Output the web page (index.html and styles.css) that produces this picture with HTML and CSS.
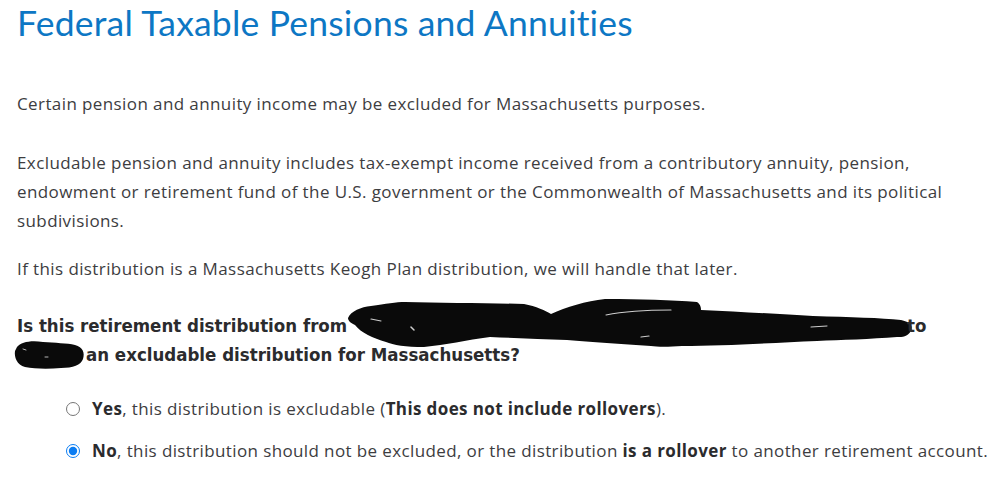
FILE: index.html
```
<!DOCTYPE html>
<html>
<head>
<meta charset="utf-8">
<link rel="stylesheet" href="styles.css">
</head>
<body>
<main class="page">
  <h1 class="title">Federal Taxable Pensions and Annuities</h1>
  <p class="intro">Certain pension and annuity income may be excluded for Massachusetts purposes.</p>
  <p class="body body-first">Excludable pension and annuity includes tax-exempt income received from a contributory annuity, pension, endowment or retirement fund of the U.S. government or the Commonwealth of Massachusetts and its political subdivisions.</p>
  <p class="body">If this distribution is a Massachusetts Keogh Plan distribution, we will handle that later.</p>
  <h2 class="question">Is this retirement distribution from <svg class="redact redact-a" width="556" height="20" viewBox="0 0 556 20" aria-hidden="true"><path d="M-3 3 C0 -4 10 -8 20 -9 C35 -11 45 -13 54 -13 C90 -12 140 -12 173 -11 C185 -9 195 -4 200 -1 C215 -8 235 -14 254 -16 C290 -16 320 -15 346 -13 C350 -10 350 -7 350 -5 C390 -3 430 -1 462 1 C500 2 530 3 550 5 C560 7 562 11 560 16 C556 22 552 22 546 22 C520 24 490 25 466 26 C420 28 370 31 331 31 C318 32 306 32 300 31 C270 29 240 27 216 25 C190 24 165 23 139 22 C115 25 95 30 73 32 C55 32 42 30 35 27 C22 23 10 18 4 10 C0 8 -3 6 -3 3 Z" fill="#0a0a0a"/><g fill="none" stroke="#ffffff" stroke-linecap="round" opacity="0.8"><path d="M20 4 L30 6" stroke-width="1.2"/><path d="M60 12 L63 15" stroke-width="1.5"/><path d="M255 0 C275 -4 300 -5 320 -5" stroke-width="1.2"/><path d="M290 22 L298 21" stroke-width="1.2"/><path d="M460 12 L476 11" stroke-width="1"/></g></svg>to <svg class="redact redact-b" width="70" height="28" viewBox="0 0 70 28" aria-hidden="true"><path d="M2 6 C6 1 16 -1 28 1 C40 2 52 2 60 4 C68 6 70 12 68 18 C66 24 58 27 46 27 C34 28 20 28 10 26 C2 24 -1 16 0 10 Z" fill="#0a0a0a"/><path d="M8 8 L11 9 M30 16 L33 16" stroke="#ffffff" stroke-width="1" stroke-linecap="round" opacity="0.7"/></svg>an excludable distribution for Massachusetts?</h2>
  <div class="options">
    <label class="option"><input type="radio" name="excl" class="radio"><span><b>Yes</b>, this distribution is excludable (<b>This does not include rollovers</b>).</span></label>
    <label class="option"><input type="radio" name="excl" class="radio" checked><span><b>No</b>, this distribution should not be excluded, or the distribution <b>is a rollover</b> to another retirement account.</span></label>
  </div>
</main>
</body>
</html>
```
FILE: styles.css
```
html, body {
  margin: 0;
  padding: 0;
  background: #ffffff;
}
.page {
  padding: 0 0 0 17px;
  width: 930px;
  font-family: "Open Sans", Lato, sans-serif;
  color: #3d3d3f;
}
.title {
  margin: 0;
  padding-top: 3px;
  font-family: Lato, "Open Sans", sans-serif;
  font-size: 35.5px;
  font-weight: 400;
  line-height: 40px;
  color: #0d77c4;
  letter-spacing: 0.2px;
}
.intro {
  margin: 46px 0 0;
  font-size: 17px;
  letter-spacing: 0.4px;
  line-height: 29px;
}
.body {
  margin: 19px 0 0;
  font-size: 17px;
  letter-spacing: 0.4px;
  line-height: 29px;
}
.body-first {
  margin-top: 30px;
}
.question {
  margin: 28px 0 0;
  font-family: "DejaVu Sans Condensed", "DejaVu Sans", sans-serif;
  font-stretch: condensed;
  font-size: 18.5px;
  font-weight: 700;
  line-height: 29px;
  color: #2b2b2d;
}
.redact {
  overflow: visible;
}
.redact-a {
  vertical-align: -3px;
  margin-left: -2px;
}
.redact-b {
  vertical-align: -8px;
  margin-left: -2px;
  margin-right: 1px;
}
.options {
  display: flex;
  flex-direction: column;
  gap: 14px;
  margin-top: 26px;
  padding-left: 49px;
}
.option {
  display: flex;
  align-items: center;
  gap: 12px;
  font-size: 17px;
  letter-spacing: 0.38px;
  line-height: 28px;
  white-space: nowrap;
}
.radio {
  margin: 0;
  width: 14px;
  height: 14px;
  flex: none;
  accent-color: #0a7cf2;
}
.option b {
  font-weight: 700;
  color: #2b2b2d;
}
```
